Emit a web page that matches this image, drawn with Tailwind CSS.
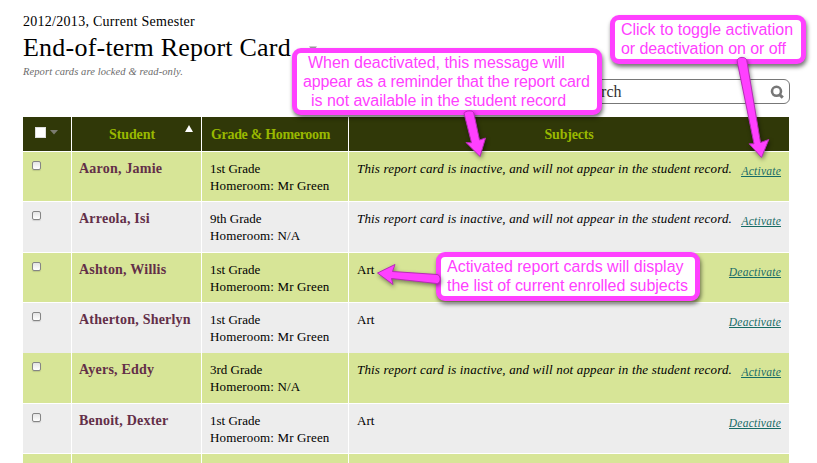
<!DOCTYPE html>
<html lang="en">
<head>
<meta charset="utf-8">
<title>End-of-term Report Card</title>
<script src="https://cdn.jsdelivr.net/npm/@tailwindcss/browser@4"></script>
</head>
<body class="bg-white">
<main class="relative h-[463px] w-[817px] overflow-hidden bg-white font-['Liberation_Serif',serif] text-black">
  <header class="flex h-[117px] justify-between pl-[23px] pr-[27px]">
    <div class="flex flex-col whitespace-nowrap pt-[13px]">
      <p class="h-[18px] text-[14px] leading-[17px] tracking-[0.28px]">2012/2013, Current Semester</p>
      <div class="flex h-[34px] items-start gap-[18px]">
        <h1 class="text-[26px] leading-[33px] tracking-[0.22px]">End-of-term Report Card</h1>
        <svg class="mt-[15px]" width="8" height="6" viewBox="0 0 8 6"><path d="M0 .5h8L4 5z" fill="#9a9a9a"/></svg>
      </div>
      <p class="text-[10.5px] italic leading-[13px] tracking-[0.1px] text-[#6b6b6b]">Report cards are locked &amp; read-only.</p>
    </div>
    <div class="mt-[79px] flex h-[25px] w-[217px] items-center justify-between rounded-[6px] border border-[#777] pl-[4px] pr-[5px]">
      <span class="text-[16px] leading-[20px] text-[#333]">Search</span>
      <svg width="14" height="14" viewBox="0 0 14 14" fill="none" stroke="#777"><circle cx="6.500" cy="6.300" r="4.500" stroke-width="2.600"/><path d="M9.300 9.300l3.500 3.300" stroke-width="3"/></svg>
    </div>
  </header>

  <section class="ml-[23px] w-[766px] whitespace-nowrap text-[13px] leading-[17px]">
    <div class="mb-px grid h-[34px] grid-cols-[48px_129px_146px_440px] gap-x-px text-[14px] font-bold leading-[36px] text-[#99b800] *:h-[34px] *:bg-[#303808]">
      <div class="flex items-start gap-[4px] pl-[12px] pt-[10px]">
        <span class="size-[11px] border border-[#ddd] bg-white"></span>
        <svg class="mt-[3px]" width="8" height="5" viewBox="0 0 8 5"><path d="M0 0h8L4 4.500z" fill="#7b7b70"/></svg>
      </div>
      <div class="flex justify-between pl-[37px] pr-[8px]"><span class="tracking-[-0.1px]">Student</span>
        <svg class="mt-[8px]" width="8" height="7" viewBox="0 0 8 7"><path d="M4 0l4 7H0z" fill="#fff"/></svg>
      </div>
      <div class="pl-[9px] tracking-[-0.32px]">Grade &amp; Homeroom</div>
      <div class="text-center tracking-[-0.2px]">Subjects</div>
    </div>
    <div id="rows"></div>
  </section>

  <div class="absolute left-[292px] top-[48px] h-[67px] w-[310px] rounded-[9px] border-[5px] border-[#ff40ff] bg-white font-['Liberation_Sans',sans-serif] text-[16px] leading-[19px] text-[#ff40ff] shadow-[1px_3px_4px_rgba(0,0,0,0.55)]">
    <p class="whitespace-nowrap pl-[11px] tracking-[-0.03px]">When deactivated, this message will</p>
    <p class="whitespace-nowrap pl-[6px] tracking-[-0.12px]">appear as a reminder that the report card</p>
    <p class="whitespace-nowrap pl-[14px] tracking-[-0.03px]">is not available in the student record</p>
  </div>
  <div class="absolute left-[610px] top-[15px] h-[49px] w-[196px] rounded-[9px] border-[5px] border-[#ff40ff] bg-white pl-[6px] font-['Liberation_Sans',sans-serif] text-[16px] leading-[19px] text-[#ff40ff] shadow-[1px_3px_4px_rgba(0,0,0,0.55)]">
    <p class="whitespace-nowrap tracking-[-0.02px]">Click to toggle activation</p>
    <p class="whitespace-nowrap tracking-[-0.08px]">or deactivation on or off</p>
  </div>
  <div class="absolute left-[436px] top-[252px] h-[49px] w-[264px] rounded-[9px] border-[5px] border-[#ff40ff] bg-white pl-[6px] font-['Liberation_Sans',sans-serif] text-[16px] leading-[19px] text-[#ff40ff] shadow-[1px_3px_4px_rgba(0,0,0,0.55)]">
    <p class="whitespace-nowrap">Activated report cards will display</p>
    <p class="whitespace-nowrap tracking-[-0.05px]">the list of current enrolled subjects</p>
  </div>

  <svg class="absolute left-0 top-0 drop-shadow-[1px_2px_2px_rgba(0,0,0,0.45)]" width="817" height="463" viewBox="0 0 817 463" fill="#ff40ff" stroke="#b52bb5" stroke-width="1" stroke-linejoin="round">
    <path d="M464.200 114C463.500 110.800 472.500 109.300 473.800 113L479.500 140L485.500 138L480 156.500L466 142.500L471.500 142.800Z"/>
    <path d="M737.300 62C736.200 56.500 745.800 55.800 746.800 60.500L760.500 142.500L768.800 139.500L761.500 157.500L749.200 143.800L754 143.800Z"/>
    <path d="M437 274.500C441.500 275.200 441.200 283.800 436.500 283.500L391.500 278.500L393 284.500L377.500 273L395 264.500L392.500 271.500Z"/>
  </svg>
</main>
<script>
  const inactive = true;
  const students = [
    ['Aaron, Jamie', '1st Grade', 'Mr Green', inactive, 'h-[49px] mb-px'],
    ['Arreola, Isi', '9th Grade', 'N/A', inactive, 'h-[50px] mb-px'],
    ['Ashton, Willis', '1st Grade', 'Mr Green', !inactive, 'h-[49px] mb-px'],
    ['Atherton, Sherlyn', '1st Grade', 'Mr Green', !inactive, 'h-[50px]'],
    ['Ayers, Eddy', '3rd Grade', 'N/A', inactive, 'h-[50px] mb-px'],
    ['Benoit, Dexter', '1st Grade', 'Mr Green', !inactive, 'h-[49px] mb-px'],
    ['', '', '', !inactive, 'h-[50px]'],
  ];
  document.getElementById('rows').innerHTML = students.map(([name, grade, room, off, size], i) => `
    <div class="grid grid-cols-[48px_129px_146px_440px] gap-x-px ${size} ${i % 2 ? '*:bg-[#ededed]' : '*:bg-[#d7e597]'}">
      <div class="pl-[9px] pt-[9px]"><span class="block size-[9px] rounded-[2px] border border-[#858585] bg-linear-to-b from-[#e4e4e4] to-white shadow-[0_1px_1px_rgba(0,0,0,0.12)]"></span></div>
      <div class="pl-[7px] pt-[8px] text-[14px] font-bold tracking-[0.22px] text-[#632f48]">${name}</div>
      <div class="pl-[8px] pt-[8px]"><p class="tracking-[0px]">${grade}</p><p class="tracking-[0.14px]">${room && 'Homeroom: ' + room}</p></div>
      <div class="flex items-start justify-between pl-[8px] pr-[8px] pt-[8px]">
        ${!name ? '' : off ? '<span class="italic tracking-[0.17px]">This report card is inactive, and will not appear in the student record.</span>' : '<span>Art</span>'}
        ${name && `<a class="mt-[4px] h-[13px] border-b border-[#176b66] text-[11.5px] italic leading-[15px] tracking-[0.24px] text-[#176b66]">${off ? 'Activate' : 'Deactivate'}</a>`}
      </div>
    </div>`).join('');
</script>
</body>
</html>
